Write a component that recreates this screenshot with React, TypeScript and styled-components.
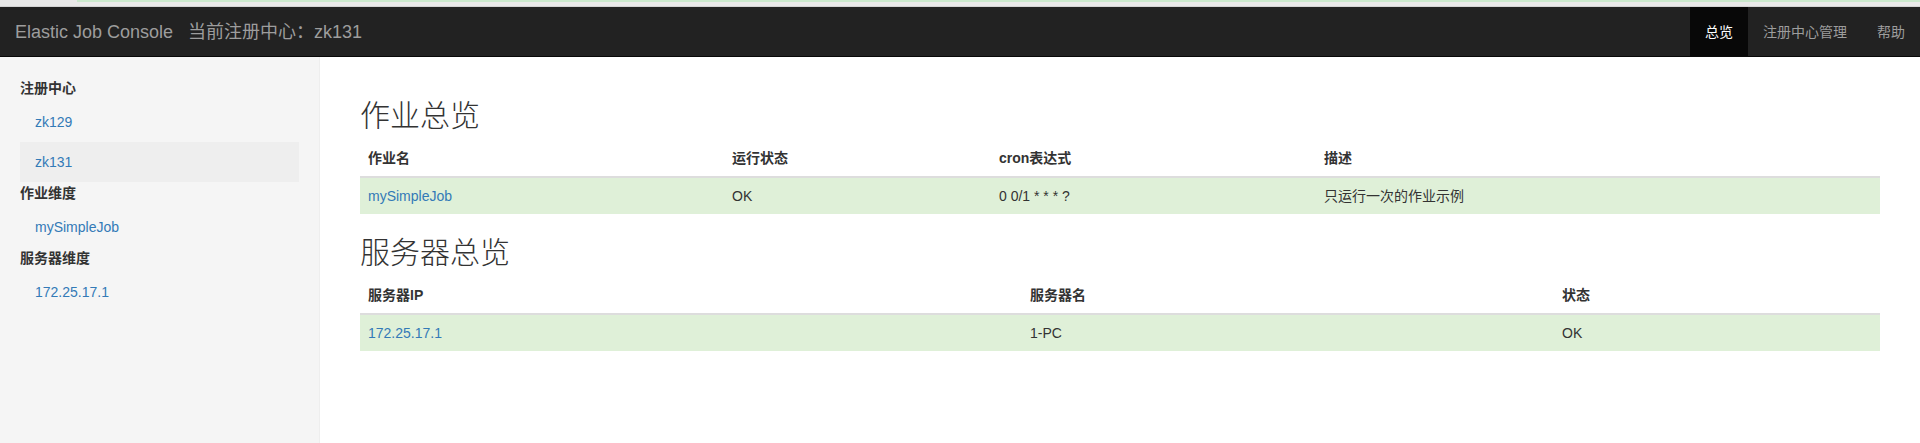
import React from "react";
import styled, { createGlobalStyle } from "styled-components";

const GlobalStyle = createGlobalStyle`
  * { box-sizing: border-box; }
  html, body { margin: 0; padding: 0; background: #fff; }
  body {
    font-family: "Liberation Sans", Arial, "Noto Sans CJK SC", sans-serif;
    font-size: 14px;
    line-height: 20px;
    color: #333;
  }
`;

const Page = styled.div`
  display: flex;
  flex-direction: column;
  min-height: 100vh;
`;

const BrowserStrip = styled.div`
  height: 7px;
  background: #e9e9e9;
  border-bottom: 1px solid #d4d4d4;
  display: flex;
  align-items: flex-start;
  padding-left: 77px;
`;

const StripLine = styled.div`
  flex: 1;
  height: 2px;
  background: #cbe8cd;
`;

const Navbar = styled.nav`
  height: 50px;
  background: #222;
  border-bottom: 1px solid #080808;
  display: flex;
  align-items: stretch;
  justify-content: space-between;
`;

const BrandGroup = styled.div`
  display: flex;
  align-items: center;
`;

const Brand = styled.a`
  padding: 0 15px;
  font-size: 18px;
  line-height: 20px;
  color: #9d9d9d;
  text-decoration: none;
`;

const NavText = styled.span`
  font-size: 18px;
  line-height: 20px;
  color: #9d9d9d;
`;

const NavRight = styled.ul`
  display: flex;
  list-style: none;
  margin: 0;
  padding: 0;
`;

const NavItem = styled.li<{ $active?: boolean }>`
  display: flex;
  align-items: center;
  padding: 0 15px;
  background: ${(p) => (p.$active ? "#080808" : "transparent")};
  color: ${(p) => (p.$active ? "#fff" : "#9d9d9d")};
  font-size: 14px;
`;

const Body = styled.div`
  flex: 1;
  display: flex;
`;

const Sidebar = styled.aside`
  width: 320px;
  flex-shrink: 0;
  background: #f5f5f5;
  border-right: 1px solid #eee;
  padding: 20px;
`;

const SideHeading = styled.div`
  font-weight: bold;
  line-height: 22px;
  margin-bottom: 3px;
  color: #333;
`;

const SideList = styled.ul`
  list-style: none;
  margin: 0;
  padding: 0;
`;

const SideItem = styled.li<{ $active?: boolean }>`
  height: 40px;
  padding: 10px 15px;
  background: ${(p) => (p.$active ? "#eee" : "transparent")};
`;

const Link = styled.a`
  color: #337ab7;
  text-decoration: none;
`;

const Main = styled.main`
  flex: 1;
  padding: 20px 40px;
`;

const Heading = styled.h2`
  font-family: "Noto Sans CJK SC", sans-serif;
  font-weight: 300;
  font-size: 30px;
  line-height: 33px;
  margin: 20px 0 10px;
  color: #333;
`;

const Table = styled.table`
  width: 100%;
  border-collapse: collapse;
  border-spacing: 0;
  margin-bottom: 20px;
`;

const Col = styled.col<{ $w?: number }>`
  width: ${(p) => (p.$w ? `${p.$w}px` : "auto")};
`;

const Th = styled.th`
  text-align: left;
  font-weight: bold;
  padding: 8px;
  line-height: 20px;
  border-bottom: 2px solid #ddd;
  vertical-align: bottom;
`;

const SuccessRow = styled.tr`
  background: #dff0d8;
`;

const Td = styled.td`
  padding: 8px;
  line-height: 20px;
  vertical-align: top;
`;

type Column = { title: string; width?: number };

const jobColumns: Column[] = [
  { title: "作业名", width: 364 },
  { title: "运行状态", width: 267 },
  { title: "cron表达式", width: 325 },
  { title: "描述" },
];

const serverColumns: Column[] = [
  { title: "服务器IP", width: 662 },
  { title: "服务器名", width: 532 },
  { title: "状态" },
];

function DataTable({
  columns,
  rows,
}: {
  columns: Column[];
  rows: React.ReactNode[][];
}) {
  return (
    <Table>
      <colgroup>
        {columns.map((c) => (
          <Col key={c.title} $w={c.width} />
        ))}
      </colgroup>
      <thead>
        <tr>
          {columns.map((c) => (
            <Th key={c.title}>{c.title}</Th>
          ))}
        </tr>
      </thead>
      <tbody>
        {rows.map((r, i) => (
          <SuccessRow key={i}>
            {r.map((cell, j) => (
              <Td key={j}>{cell}</Td>
            ))}
          </SuccessRow>
        ))}
      </tbody>
    </Table>
  );
}

export default function App() {
  return (
    <Page>
      <GlobalStyle />
      <BrowserStrip>
        <StripLine />
      </BrowserStrip>
      <Navbar>
        <BrandGroup>
          <Brand href="#">Elastic Job Console</Brand>
          <NavText>当前注册中心：zk131</NavText>
        </BrandGroup>
        <NavRight>
          <NavItem $active>总览</NavItem>
          <NavItem>注册中心管理</NavItem>
          <NavItem>帮助</NavItem>
        </NavRight>
      </Navbar>
      <Body>
        <Sidebar>
          <SideHeading>注册中心</SideHeading>
          <SideList>
            <SideItem>
              <Link href="#">zk129</Link>
            </SideItem>
            <SideItem $active>
              <Link href="#">zk131</Link>
            </SideItem>
          </SideList>
          <SideHeading>作业维度</SideHeading>
          <SideList>
            <SideItem>
              <Link href="#">mySimpleJob</Link>
            </SideItem>
          </SideList>
          <SideHeading>服务器维度</SideHeading>
          <SideList>
            <SideItem>
              <Link href="#">172.25.17.1</Link>
            </SideItem>
          </SideList>
        </Sidebar>
        <Main>
          <Heading>作业总览</Heading>
          <DataTable
            columns={jobColumns}
            rows={[
              [
                <Link href="#">mySimpleJob</Link>,
                "OK",
                "0 0/1 * * * ?",
                "只运行一次的作业示例",
              ],
            ]}
          />
          <Heading>服务器总览</Heading>
          <DataTable
            columns={serverColumns}
            rows={[[<Link href="#">172.25.17.1</Link>, "1-PC", "OK"]]}
          />
        </Main>
      </Body>
    </Page>
  );
}
